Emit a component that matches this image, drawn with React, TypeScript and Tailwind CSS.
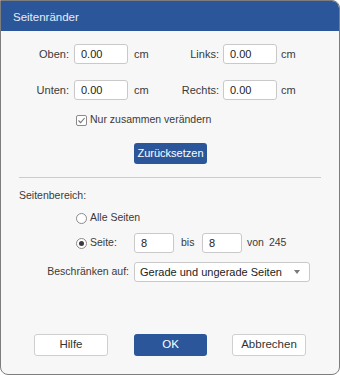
import React from "react"

const font = { fontFamily: '"Liberation Sans", Arial, sans-serif' }

function TextBox({ value, w }: { value: string; w: string }) {
  return (
    <div
      className={`${w} h-[20px] flex items-center pl-[6px] bg-white border border-[#c9c9c9] rounded-[3px] text-[11px] text-[#222]`}
    >
      {value}
    </div>
  )
}

function Radio({ checked }: { checked?: boolean }) {
  return (
    <span className="w-[11px] h-[11px] rounded-full border border-[#8a8a8a] bg-white flex items-center justify-center shrink-0">
      {checked && <span className="w-[5px] h-[5px] rounded-full bg-[#3a3a3a]" />}
    </span>
  )
}

function Button({ children, primary, w }: { children: React.ReactNode; primary?: boolean; w: string }) {
  return (
    <div
      className={
        primary
          ? `${w} h-[22px] flex items-center justify-center rounded-[3px] bg-[#2b579a] text-white text-[11.5px]`
          : `${w} h-[22px] flex items-center justify-center rounded-[3px] bg-white border border-[#cfcfcf] text-[#333] text-[11.5px]`
      }
    >
      {children}
    </div>
  )
}

export default function App() {
  return (
    <div className="w-[340px] h-[375px] bg-white" style={font}>
      <div className="w-[340px] h-[375px] flex flex-col bg-[#f7f7f7] border border-[#7d7d7d] rounded-tr-[8px] rounded-b-[8px] overflow-hidden text-[10.5px] text-[#3a3a3a]">
        <div className="h-[30px] shrink-0 bg-[#2b579a] flex items-center pl-[12px] pt-[3px] text-[11.5px] text-[#e6ecf5]">
          Seitenränder
        </div>

        {/* Ränder */}
        <div className="mt-[13px] flex items-center text-[11px]">
          <div className="w-[68px] text-right">Oben:</div>
          <div className="ml-[5px]">
            <TextBox value="0.00" w="w-[54px]" />
          </div>
          <div className="ml-[6px] w-[16px]">cm</div>
          <div className="w-[69px] text-right">Links:</div>
          <div className="ml-[4px]">
            <TextBox value="0.00" w="w-[54px]" />
          </div>
          <div className="ml-[4px]">cm</div>
        </div>
        <div className="mt-[16px] flex items-center text-[11px]">
          <div className="w-[68px] text-right">Unten:</div>
          <div className="ml-[5px]">
            <TextBox value="0.00" w="w-[54px]" />
          </div>
          <div className="ml-[6px] w-[16px]">cm</div>
          <div className="w-[69px] text-right">Rechts:</div>
          <div className="ml-[4px]">
            <TextBox value="0.00" w="w-[54px]" />
          </div>
          <div className="ml-[4px]">cm</div>
        </div>

        <div className="mt-[13px] h-[14px] pl-[75px] flex items-center">
          <span className="w-[11px] h-[11px] rounded-[2px] border border-[#8a8a8a] bg-white flex items-center justify-center">
            <svg width="9" height="9" viewBox="0 0 9 9">
              <path d="M1.5 4.5 L3.6 6.6 L7.6 2" fill="none" stroke="#777" strokeWidth="1.1" />
            </svg>
          </span>
          <span className="ml-[3px]">Nur zusammen verändern</span>
        </div>

        <div className="mt-[16px] pl-[133px]">
          <div className="w-[73px] h-[21px] flex items-center justify-center rounded-[3px] bg-[#2b579a] text-white text-[11px]">
            Zurücksetzen
          </div>
        </div>

        <div className="mt-[13px] mx-[18px] h-px bg-[#cccccc]" />

        {/* Seitenbereich */}
        <div className="mt-[11px] h-[14px] pl-[18px] flex items-center">Seitenbereich:</div>

        <div className="mt-[8px] h-[14px] pl-[75px] flex items-center">
          <Radio />
          <span className="ml-[3px]">Alle Seiten</span>
        </div>

        <div className="mt-[8px] pl-[75px] flex items-center">
          <div className="w-[58px] flex items-center">
            <Radio checked />
            <span className="ml-[3px]">Seite:</span>
          </div>
          <TextBox value="8" w="w-[40px]" />
          <div className="w-[28px] pl-[7px]">bis</div>
          <TextBox value="8" w="w-[40px]" />
          <div className="ml-[5px]">von</div>
          <div className="ml-[5px]">245</div>
        </div>

        <div className="mt-[9px] flex items-center">
          <div className="w-[128px] text-right">Beschränken auf:</div>
          <div className="ml-[5px] w-[176px] h-[20px] flex items-center justify-between pl-[5px] pr-[9px] bg-white border border-[#c9c9c9] rounded-[3px] text-[11px] text-[#222]">
            <span>Gerade und ungerade Seiten</span>
            <svg width="6" height="4" viewBox="0 0 6 4">
              <path d="M0 0 L6 0 L3 4 Z" fill="#7a7a7a" />
            </svg>
          </div>
        </div>

        <div className="mt-auto mb-[18px] pl-[33px] flex items-center">
          <Button w="w-[74px]">Hilfe</Button>
          <div className="ml-[26px]">
            <Button primary w="w-[73px]">OK</Button>
          </div>
          <div className="ml-[25px]">
            <Button w="w-[74px]">Abbrechen</Button>
          </div>
        </div>
      </div>
    </div>
  )
}
